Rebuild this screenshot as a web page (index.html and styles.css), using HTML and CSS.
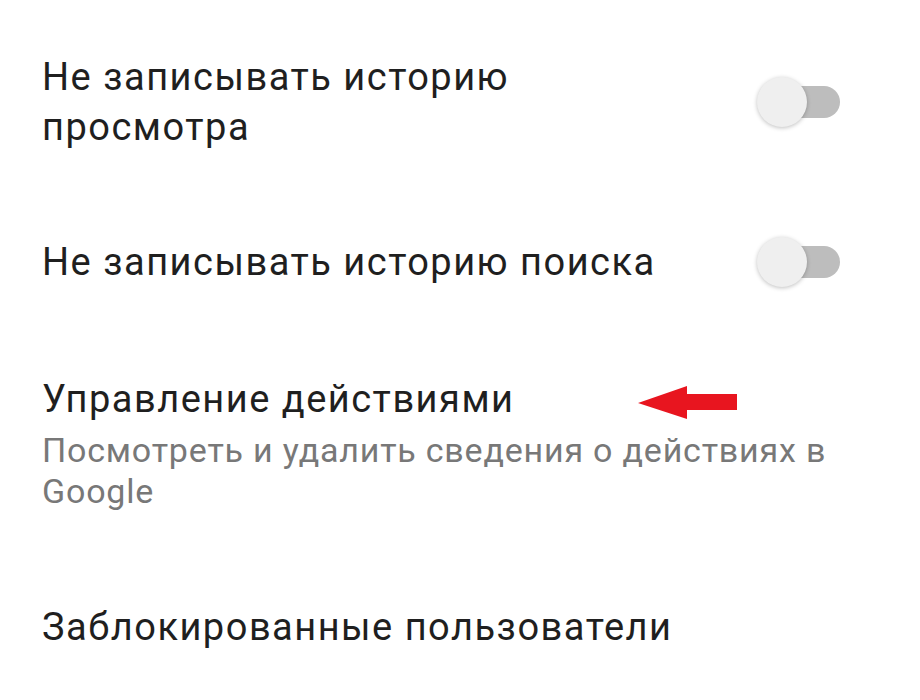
FILE: index.html
```html
<!DOCTYPE html>
<html lang="ru">
<head>
<meta charset="utf-8">
<link rel="stylesheet" href="styles.css">
</head>
<body>
<div class="list">
  <div class="row">
    <div class="text"><div class="title">Не записывать историю<br>просмотра</div></div>
    <div class="switch"><span class="track"></span><span class="thumb"></span></div>
  </div>
  <div class="row">
    <div class="text"><div class="title">Не записывать историю поиска</div></div>
    <div class="switch"><span class="track"></span><span class="thumb"></span></div>
  </div>
  <div class="row annotated">
    <div class="text">
      <div class="title">Управление действиями</div>
      <div class="subtitle">Посмотреть и удалить сведения о действиях в Google</div>
    </div>
    <svg class="arrow" width="100" height="34" viewBox="0 0 100 34">
      <polygon points="0,17 49,0 49,8 99,8 99,24 49,24 49,33" fill="#e8151f"/>
    </svg>
  </div>
  <div class="row last">
    <div class="text"><div class="title">Заблокированные пользователи</div></div>
  </div>
</div>
</body>
</html>
```
FILE: styles.css
```css
html, body {
  margin: 0;
  padding: 0;
  background: #ffffff;
}
body {
  width: 920px;
  height: 700px;
  overflow: hidden;
  font-family: Roboto, "Noto Sans", sans-serif;
}
.list {
  display: flex;
  flex-direction: column;
  gap: 85px;
  padding: 52px 80px 0 42px;
}
.row {
  display: flex;
  align-items: center;
  justify-content: space-between;
  position: relative;
}
.annotated {
  margin-top: 2px;
}
.last {
  margin-top: 5px;
}
.text {
  flex: 1;
}
.title {
  font-size: 38px;
  line-height: 50px;
  letter-spacing: 1.5px;
  color: #1f1f1f;
}
.subtitle {
  margin-top: 6px;
  font-size: 34px;
  line-height: 41px;
  letter-spacing: 0.8px;
  color: #787878;
  width: 800px;
}
.switch {
  position: relative;
  width: 83px;
  height: 50px;
  flex: none;
}
.track {
  position: absolute;
  right: 0;
  top: 9px;
  width: 66px;
  height: 32px;
  border-radius: 16px;
  background: #bdbdbd;
}
.thumb {
  position: absolute;
  left: 0;
  top: 0;
  width: 50px;
  height: 50px;
  border-radius: 50%;
  background: #efefef;
  box-shadow: 0 1px 4px rgba(0,0,0,0.25);
}
.arrow {
  position: absolute;
  left: 596px;
  top: 12px;
}
```
